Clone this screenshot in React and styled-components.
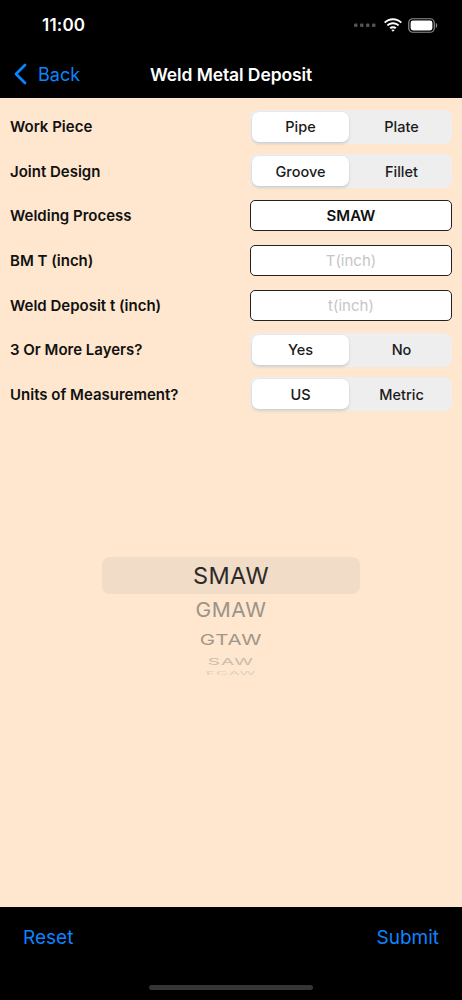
import React, { useState } from 'react';
import styled, { createGlobalStyle } from 'styled-components';

const GlobalStyle = createGlobalStyle`
	html, body {
		margin: 0;
		padding: 0;
		background: #000;
	}
	* {
		box-sizing: border-box;
	}
`

const Screen = styled.div`
	width: 462px;
	height: 1000px;
	display: flex;
	flex-direction: column;
	background: #fee7ce;
	font-family: Inter, "Liberation Sans", sans-serif;
	overflow: hidden;
`

const Header = styled.header`
	background: #000;
	color: #fff;
	height: 98px;
	display: flex;
	flex-direction: column;
`

const StatusBar = styled.div`
	height: 50px;
	display: flex;
	align-items: center;
	justify-content: space-between;
	padding: 0 24px 0 42px;

	.time {
		font-size: 17px;
		font-weight: 600;
		letter-spacing: 0.2px;
	}

	.icons {
		display: flex;
		align-items: center;
		gap: 6px;
	}
`

const NavBar = styled.div`
	height: 48px;
	display: grid;
	grid-template-columns: 1fr auto 1fr;
	align-items: center;
	padding: 0 14px;

	h1 {
		margin: 0;
		font-size: 17.5px;
		font-weight: 600;
		letter-spacing: -0.1px;
	}
`

const BackButton = styled.button`
	justify-self: start;
	display: flex;
	align-items: center;
	gap: 11px;
	background: none;
	border: 0;
	padding: 0;
	color: #0a84ff;
	font-family: inherit;
	font-size: 18px;
`

const Form = styled.div`
	display: flex;
	flex-direction: column;
	gap: 11.67px;
	padding: 12px 10px 0 10px;
`

const Row = styled.div`
	height: 33px;
	display: flex;
	align-items: center;
	justify-content: space-between;

	label {
		font-size: 15px;
		font-weight: 600;
		color: #111;
	}
`

const Segmented = styled.div`
	width: 202px;
	height: 34px;
	display: grid;
	grid-template-columns: 1fr 1fr;
	gap: 4px;
	padding: 2px;
	border-radius: 8px;
	background: #eeeeee;
`

const Segment = styled.button`
	border: 0;
	border-radius: 7px;
	font-family: inherit;
	font-size: 14.5px;
	font-weight: 500;
	color: #1a1a1a;
	background: ${props => props.active ? '#fff' : 'transparent'};
	box-shadow: ${props => props.active ? '0 2px 3px rgba(0,0,0,0.12), 0 0 0 0.5px rgba(0,0,0,0.04)' : 'none'};
	padding: 0;
`

const Field = styled.div`
	width: 202px;
	height: 31px;
	border: 1px solid #222;
	border-radius: 5px;
	background: #fff;
	display: flex;
	align-items: center;
	justify-content: center;
	font-size: 15px;
	font-weight: ${props => props.placeholder ? 400 : 600};
	color: ${props => props.placeholder ? '#c6c6c8' : '#111'};
`

const Picker = styled.div`
	margin-top: 146px;
	display: flex;
	flex-direction: column;
	align-items: center;
	height: 120px;
	overflow: hidden;
`

const PickerItem = styled.div`
	width: 258px;
	height: ${props => props.h}px;
	display: flex;
	align-items: center;
	justify-content: center;
	flex-shrink: 0;
	border-radius: 8px;
	background: ${props => props.selected ? '#f0dcc7' : 'transparent'};
	color: ${props => props.color};
	font-size: ${props => props.size}px;

	span {
		display: inline-block;
		transform: scaleY(${props => props.squash});
		letter-spacing: ${props => props.track}px;
	}
`

const Spacer = styled.div`
	flex: 1;
`

const Footer = styled.footer`
	height: 93px;
	background: #000;
	display: flex;
	flex-direction: column;
	justify-content: space-between;
	padding: 19px 23px 10px 23px;
`

const FooterButtons = styled.div`
	display: flex;
	justify-content: space-between;

	button {
		background: none;
		border: 0;
		padding: 0;
		color: #0a84ff;
		font-family: inherit;
		font-size: 19px;
	}
`

const HomeIndicator = styled.div`
	align-self: center;
	width: 164px;
	height: 5px;
	border-radius: 3px;
	background: #353535;
`

const SegmentRow = ({ label, options, value, onChange }) => (
	<Row>
		<label>{label}</label>
		<Segmented>
			{options.map(o => (
				<Segment key={o} active={value === o} onClick={() => onChange(o)}>{o}</Segment>
			))}
		</Segmented>
	</Row>
)

const Wifi = () => (
	<svg width="18" height="14" viewBox="0 0 18 14">
		<path d="M9 2.2c3 0 5.7 1.2 7.7 3.1l1.3-1.4C15.6 1.6 12.4.2 9 .2S2.4 1.6 0 3.9l1.3 1.4C3.3 3.4 6 2.2 9 2.2z" fill="#fff" />
		<path d="M9 6.3c1.9 0 3.6.7 4.9 1.9l1.3-1.4C13.6 5.3 11.4 4.3 9 4.3S4.4 5.3 2.8 6.8l1.3 1.4C5.4 7 7.1 6.3 9 6.3z" fill="#fff" />
		<path d="M9 10.2c.8 0 1.5.3 2.1.8L12.5 9.6C11.6 8.8 10.4 8.3 9 8.3S6.4 8.8 5.5 9.6L6.9 11c.6-.5 1.300-.8 2.1-.8zM9 13.8l1.7-1.8c-.5-.4-1.1-.6-1.7-.6s-1.2.2-1.700.6z" fill="#fff" />
	</svg>
)

const Battery = () => (
	<svg width="30" height="15" viewBox="0 0 30 15">
		<rect x="0.75" y="0.75" width="25.5" height="13.5" rx="4" fill="none" stroke="#8e8e93" strokeWidth="1.2" />
		<rect x="2.6" y="2.6" width="21.8" height="9.8" rx="2.4" fill="#fff" />
		<path d="M27.8 5v5c.8-.3 1.4-1.3 1.4-2.5s-.6-2.2-1.4-2.5z" fill="#8e8e93" />
	</svg>
)

const Signal = () => (
	<svg width="22" height="4" viewBox="0 0 22 4" style={{ marginRight: 2 }}>
		{[0, 6, 12, 18].map(x => <rect key={x} x={x} y="0.5" width="3.5" height="3.5" rx="1.2" fill="#555" />)}
	</svg>
)

const wheel = [
	{ text: 'SMAW', h: 37, size: 23.5, squash: 1, track: 0.4, color: '#2c2a28', selected: true },
	{ text: 'GMAW', h: 32, size: 21, squash: 0.95, track: 0.6, color: '#9c9389' },
	{ text: 'GTAW', h: 28, size: 20.5, squash: 0.72, track: 0.8, color: '#a0968b' },
	{ text: 'SAW', h: 15, size: 19, squash: 0.5, track: 1.2, color: '#c9bdaf' },
	{ text: 'FCAW', h: 8, size: 16, squash: 0.28, track: 1, color: '#ddd0c2' },
]

const App = () => {
	const [work, setWork] = useState('Pipe');
	const [joint, setJoint] = useState('Groove');
	const [layers, setLayers] = useState('Yes');
	const [units, setUnits] = useState('US');

	return (
		<Screen>
			<GlobalStyle />
			<Header>
				<StatusBar>
					<span className="time">11:00</span>
					<div className="icons">
						<Signal />
						<Wifi />
						<Battery />
					</div>
				</StatusBar>
				<NavBar>
					<BackButton>
						<svg width="13" height="22" viewBox="0 0 13 22">
							<path d="M11 2L2 11l9 9" fill="none" stroke="#0a84ff" strokeWidth="2.8" strokeLinecap="round" strokeLinejoin="round" />
						</svg>
						Back
					</BackButton>
					<h1>Weld Metal Deposit</h1>
					<div />
				</NavBar>
			</Header>

			<Form>
				<SegmentRow label="Work Piece" options={['Pipe', 'Plate']} value={work} onChange={setWork} />
				<SegmentRow label="Joint Design" options={['Groove', 'Fillet']} value={joint} onChange={setJoint} />
				<Row>
					<label>Welding Process</label>
					<Field>SMAW</Field>
				</Row>
				<Row>
					<label>BM T (inch)</label>
					<Field placeholder>T(inch)</Field>
				</Row>
				<Row>
					<label>Weld Deposit t (inch)</label>
					<Field placeholder>t(inch)</Field>
				</Row>
				<SegmentRow label="3 Or More Layers?" options={['Yes', 'No']} value={layers} onChange={setLayers} />
				<SegmentRow label="Units of Measurement?" options={['US', 'Metric']} value={units} onChange={setUnits} />
			</Form>

			<Picker>
				{wheel.map(item => (
					<PickerItem key={item.text} {...item}>
						<span>{item.text}</span>
					</PickerItem>
				))}
			</Picker>

			<Spacer />

			<Footer>
				<FooterButtons>
					<button>Reset</button>
					<button>Submit</button>
				</FooterButtons>
				<HomeIndicator />
			</Footer>
		</Screen>
	);
}

export default App;
